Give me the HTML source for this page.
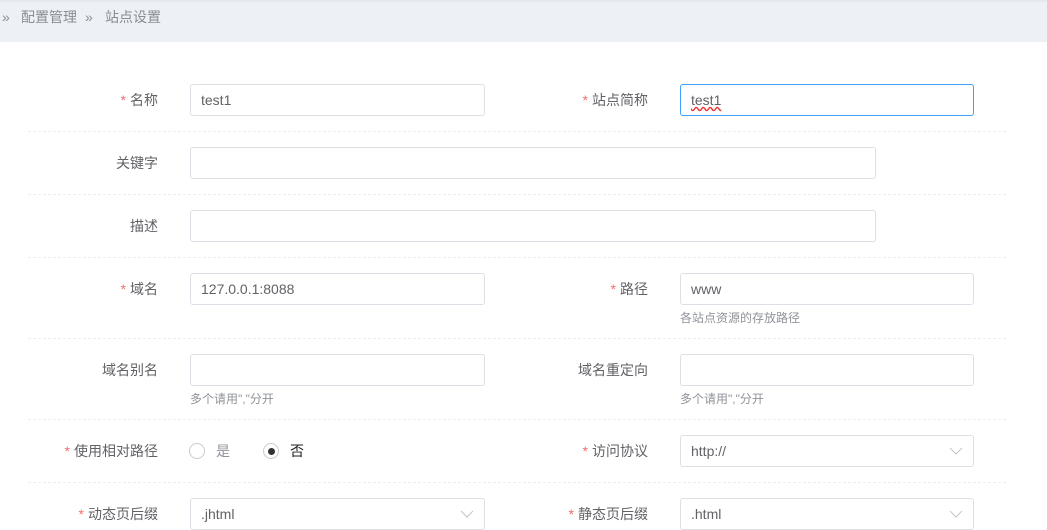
<!DOCTYPE html>
<html><head><meta charset="utf-8"><style>
body{margin:0;width:1047px;height:525px;overflow:hidden;background:#fff;font-family:"Liberation Sans","Noto Sans CJK SC",sans-serif;font-size:14px;color:#606266;position:relative}
.bc{position:absolute;left:0;top:0;width:1047px;height:42px;background:#edf0f5;border-top:2px solid #e4e7ed;box-sizing:border-box;color:#8a8d93;font-size:14px;line-height:30px}
.a{position:absolute}
.lbl{position:absolute;text-align:right;width:200px;line-height:32px;color:#606266}
.lbl b{color:#f56c6c;font-weight:normal;margin-right:4px}
.in{position:absolute;height:32px;border:1px solid #dcdfe6;border-radius:3px;box-sizing:border-box;line-height:30px;padding-left:10px;color:#606266}
.sep{position:absolute;left:28px;width:978px;border-top:1px dashed #eceef1}
.hint{position:absolute;font-size:12px;color:#909399}
.arr{position:absolute;right:10px;top:11px;width:14px;height:8px}
</style></head><body>
<div class="bc"><span class="a" style="left:2px;font-size:14px">»</span><span class="a" style="left:21px">配置管理</span><span class="a" style="left:85px;font-size:14px">»</span><span class="a" style="left:105px">站点设置</span></div>

<div class="lbl" style="left:-42px;top:84px"><b>*</b>名称</div>
<div class="in" style="left:190px;top:84px;width:295px">test1</div>
<div class="lbl" style="left:448px;top:84px"><b>*</b>站点简称</div>
<div class="in" style="left:680px;top:84px;width:294px;border-color:#409eff"><span style="text-decoration:underline wavy #e33">test1</span></div>
<div class="sep" style="top:131px"></div>

<div class="lbl" style="left:-42px;top:147px">关键字</div>
<div class="in" style="left:190px;top:147px;width:686px"></div>
<div class="sep" style="top:194px"></div>

<div class="lbl" style="left:-42px;top:210px">描述</div>
<div class="in" style="left:190px;top:210px;width:686px"></div>
<div class="sep" style="top:257px"></div>

<div class="lbl" style="left:-42px;top:273px"><b>*</b>域名</div>
<div class="in" style="left:190px;top:273px;width:295px">127.0.0.1:8088</div>
<div class="lbl" style="left:448px;top:273px"><b>*</b>路径</div>
<div class="in" style="left:680px;top:273px;width:294px">www</div>
<div class="hint" style="left:680px;top:309px">各站点资源的存放路径</div>
<div class="sep" style="top:338px"></div>

<div class="lbl" style="left:-42px;top:354px">域名别名</div>
<div class="in" style="left:190px;top:354px;width:295px"></div>
<div class="hint" style="left:190px;top:390px">多个请用","分开</div>
<div class="lbl" style="left:448px;top:354px">域名重定向</div>
<div class="in" style="left:680px;top:354px;width:294px"></div>
<div class="hint" style="left:680px;top:390px">多个请用","分开</div>
<div class="sep" style="top:419px"></div>

<div class="lbl" style="left:-42px;top:435px"><b>*</b>使用相对路径</div>
<div class="a" style="left:189px;top:443px;width:16px;height:16px;border:1px solid #c8ccd4;border-radius:50%;box-sizing:border-box"></div>
<div class="a" style="left:216px;top:435px;line-height:32px;color:#909399">是</div>
<div class="a" style="left:263px;top:443px;width:16px;height:16px;border:1px solid #c8ccd4;border-radius:50%;box-sizing:border-box"><div style="position:absolute;left:3.5px;top:3.5px;width:7px;height:7px;border-radius:50%;background:#333"></div></div>
<div class="a" style="left:290px;top:435px;line-height:32px;color:#222">否</div>
<div class="lbl" style="left:448px;top:435px"><b>*</b>访问协议</div>
<div class="in" style="left:680px;top:435px;width:294px">http://<svg class="arr" viewBox="0 0 14 8"><path d="M1 1L7 7L13 1" fill="none" stroke="#c0c4cc" stroke-width="1"/></svg></div>
<div class="sep" style="top:482px"></div>

<div class="lbl" style="left:-42px;top:498px"><b>*</b>动态页后缀</div>
<div class="in" style="left:190px;top:498px;width:295px">.jhtml<svg class="arr" viewBox="0 0 14 8"><path d="M1 1L7 7L13 1" fill="none" stroke="#c0c4cc" stroke-width="1"/></svg></div>
<div class="lbl" style="left:448px;top:498px"><b>*</b>静态页后缀</div>
<div class="in" style="left:680px;top:498px;width:294px">.html<svg class="arr" viewBox="0 0 14 8"><path d="M1 1L7 7L13 1" fill="none" stroke="#c0c4cc" stroke-width="1"/></svg></div>
</body></html>
